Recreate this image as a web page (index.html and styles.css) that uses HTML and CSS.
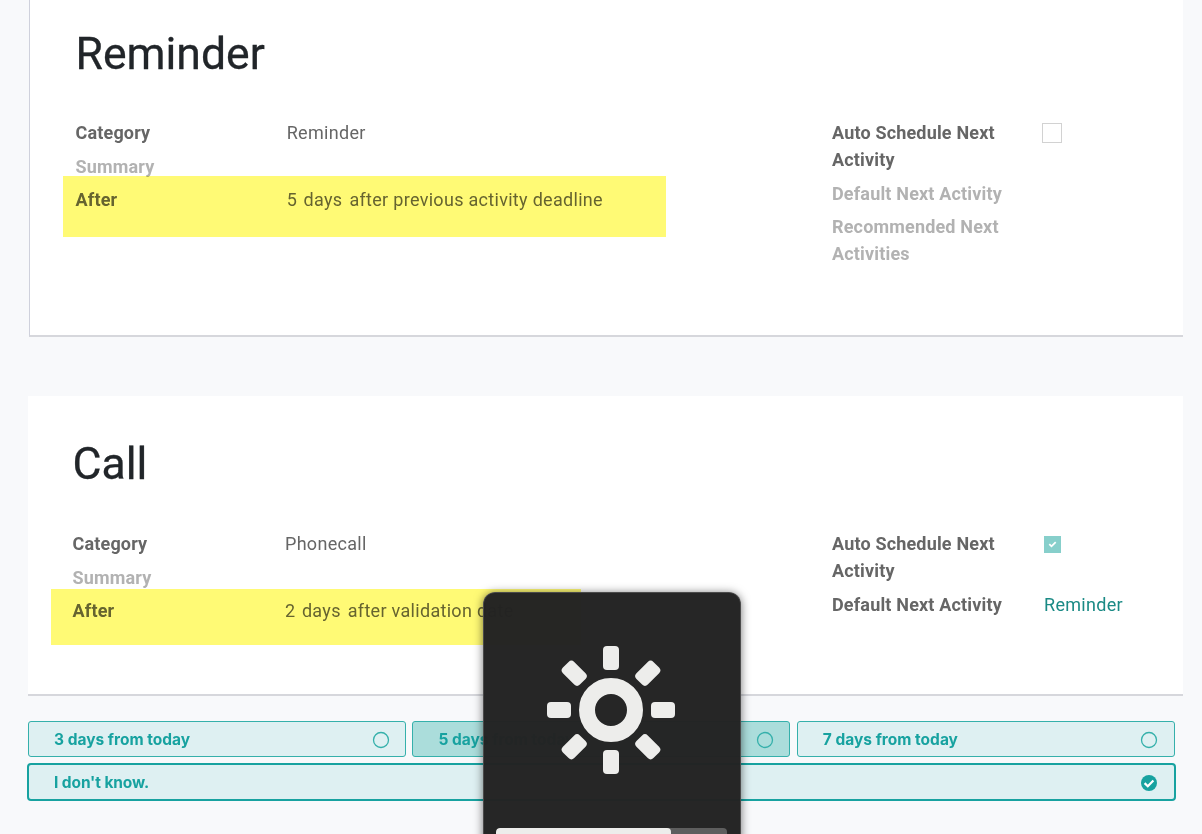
FILE: index.html
```
<!DOCTYPE html>
<html lang="en">
<head>
<meta charset="utf-8">
<title>Activity types</title>
<link rel="stylesheet" href="styles.css">
</head>
<body>
<main class="page">
  <section class="sheet sheet-reminder">
    <div class="mark mark-reminder"></div>
    <h1 class="title">Reminder</h1>
    <div class="groups">
      <dl class="group">
        <dt>Category</dt><dd>Reminder</dd>
        <dt class="empty">Summary</dt><dd></dd>
        <dt>After</dt><dd class="delay"><span>5</span><span>days</span><span>after previous activity deadline</span></dd>
      </dl>
      <dl class="group">
        <dt>Auto Schedule Next Activity</dt><dd><span class="checkbox"></span></dd>
        <dt class="empty">Default Next Activity</dt><dd></dd>
        <dt class="empty">Recommended Next Activities</dt><dd></dd>
      </dl>
    </div>
  </section>

  <section class="sheet sheet-call">
    <div class="mark mark-call"></div>
    <h1 class="title">Call</h1>
    <div class="groups">
      <dl class="group">
        <dt>Category</dt><dd>Phonecall</dd>
        <dt class="empty">Summary</dt><dd></dd>
        <dt>After</dt><dd class="delay"><span>2</span><span>days</span><span>after validation date</span></dd>
      </dl>
      <dl class="group">
        <dt>Auto Schedule Next Activity</dt>
        <dd><span class="checkbox checked"><svg viewBox="0 0 17 17" width="17" height="17"><path d="M5.3 8.1l2.2 2.2 4.2-4.1" fill="none" stroke="#fff" stroke-width="1.8"/></svg></span></dd>
        <dt>Default Next Activity</dt><dd><a class="link">Reminder</a></dd>
      </dl>
    </div>
  </section>

  <div class="answers">
    <div class="answer"><span>3 days from today</span><svg class="radio" viewBox="0 0 18 18"><circle cx="9" cy="9" r="7.5"/></svg></div>
    <div class="answer hover"><span>5 days from today</span><svg class="radio" viewBox="0 0 18 18"><circle cx="9" cy="9" r="7.5"/></svg></div>
    <div class="answer"><span>7 days from today</span><svg class="radio" viewBox="0 0 18 18"><circle cx="9" cy="9" r="7.5"/></svg></div>
    <div class="answer selected"><span>I don't know.</span><svg class="radio on" viewBox="0 0 18 18"><circle cx="9" cy="9" r="8"/><path d="M4.6 9.1l3.2 3.2 5.6-5.8"/></svg></div>
  </div>
</main>

<div class="osd">
  <svg class="sun" viewBox="-64 -64 128 128">
    <circle r="24" fill="none" stroke="#ededeb" stroke-width="16"/>
    <g fill="#ededeb">
      <rect x="-8" y="-64" width="16" height="24" rx="4"/>
      <rect x="-8" y="-64" width="16" height="24" rx="4" transform="rotate(45)"/>
      <rect x="-8" y="-64" width="16" height="24" rx="4" transform="rotate(90)"/>
      <rect x="-8" y="-64" width="16" height="24" rx="4" transform="rotate(135)"/>
      <rect x="-8" y="-64" width="16" height="24" rx="4" transform="rotate(180)"/>
      <rect x="-8" y="-64" width="16" height="24" rx="4" transform="rotate(225)"/>
      <rect x="-8" y="-64" width="16" height="24" rx="4" transform="rotate(270)"/>
      <rect x="-8" y="-64" width="16" height="24" rx="4" transform="rotate(315)"/>
    </g>
  </svg>
  <div class="level"><div class="level-fill"></div></div>
</div>
</body>
</html>
```
FILE: styles.css
```
* { box-sizing: border-box; }
body {
  margin: 0;
  height: 834px;
  overflow: hidden;
  position: relative;
  background: #f8f9fb;
  font-family: Roboto, sans-serif;
  font-size: 18px;
  line-height: 26.9px;
  color: #666;
}
.page { padding: 0 19px 0 28px; }
.sheet { position: relative; background: #fff; border-bottom: 2px solid #d6d7dc; }
.sheet-reminder {
  height: 337px;
  margin-left: 1px;
  padding: 25px 0 0 45.5px;
  border-left: 1px solid #cfd1dc;
}
.sheet-call { height: 300px; margin-top: 59px; padding: 39px 0 0 44.5px; }
.title {
  margin: 0;
  font-size: 44.5px;
  font-weight: 400;
  line-height: 58px;
  color: #212529;
  -webkit-text-stroke: .3px #212529;
}
.groups { display: grid; grid-template-columns: 756.5px 1fr; margin-top: 37px; }
.sheet-call .groups { grid-template-columns: 759.5px 1fr; margin-top: 38px; }
.group {
  display: grid;
  grid-template-columns: 211.2px 1fr;
  align-content: start;
  row-gap: 6.8px;
  margin: 0;
}
.sheet-call .group { grid-template-columns: 212.5px 1fr; }
.group + .group { grid-template-columns: 211px 1fr; }
.sheet-call .group + .group { grid-template-columns: 212px 1fr; }
dt { padding-right: 30px; font-weight: 700; letter-spacing: .17px; }
dt.empty { color: #b2b2b2; }
dd { margin: 0; letter-spacing: .3px; }
.delay { display: flex; }
.delay span:nth-child(2) { margin: 0 7px 0 6.5px; }
.link { color: #1a8a85; }
.checkbox { display: block; width: 20px; height: 20px; margin: 3px 0 0 -1px; border: 1px solid #d2d2d2; background: #fff; }
.checkbox.checked { width: 17px; height: 17px; margin: 5px 0 0; border: 0; background: #87cfcb; }
.checkbox svg { display: block; }
.mark { position: absolute; z-index: 1; background: #fffa75; mix-blend-mode: multiply; }
.mark-reminder { left: 33px; top: 176px; width: 603px; height: 61px; }
.mark-call { left: 23px; top: 193px; width: 530px; height: 56px; }

.answers {
  display: grid;
  grid-template-columns: repeat(3, 378px);
  column-gap: 6.4px;
  row-gap: 6px;
  width: 1147px;
  margin-top: 25px;
  font: 700 15.5px/34px Inter, sans-serif;
  color: #17a2a0;
}
.answer {
  display: flex;
  justify-content: space-between;
  align-items: center;
  height: 36px;
  padding: 1px 15.5px 0 25px;
  border: 1px solid #35b0ab;
  border-radius: 3px;
  background: #def0f2;
}
.answer.hover { background: #abdddb; }
.answer.selected {
  grid-column: 1 / -1;
  height: 38px;
  margin: 0 -1px;
  border: 2px solid #17a2a0;
  border-radius: 4px;
  letter-spacing: -.1px;
}
.radio { width: 18px; height: 18px; fill: none; stroke: #35b0ab; stroke-width: 1.3; }
.radio.on circle { fill: #17a2a0; stroke: none; }
.radio.on path { stroke: #fff; stroke-width: 2.2; }

.osd {
  position: absolute;
  left: 483px;
  top: 592px;
  width: 258px;
  height: 258px;
  padding: 54px 14px 0;
  border: 1px solid rgba(80, 80, 80, .9);
  border-radius: 12px;
  background: rgba(35, 35, 35, .985);
  box-shadow: 0 1px 10px rgba(0, 0, 0, .55);
  z-index: 2;
}
.sun { display: block; width: 128px; height: 128px; margin: -1px 0 54px 49.3px; }
.level { width: 231px; height: 10px; margin-left: -2px; border-radius: 4px; background: #5e5e5e; overflow: hidden; }
.level-fill { width: 175px; height: 100%; border-radius: 4px; background: #ededeb; }
```
